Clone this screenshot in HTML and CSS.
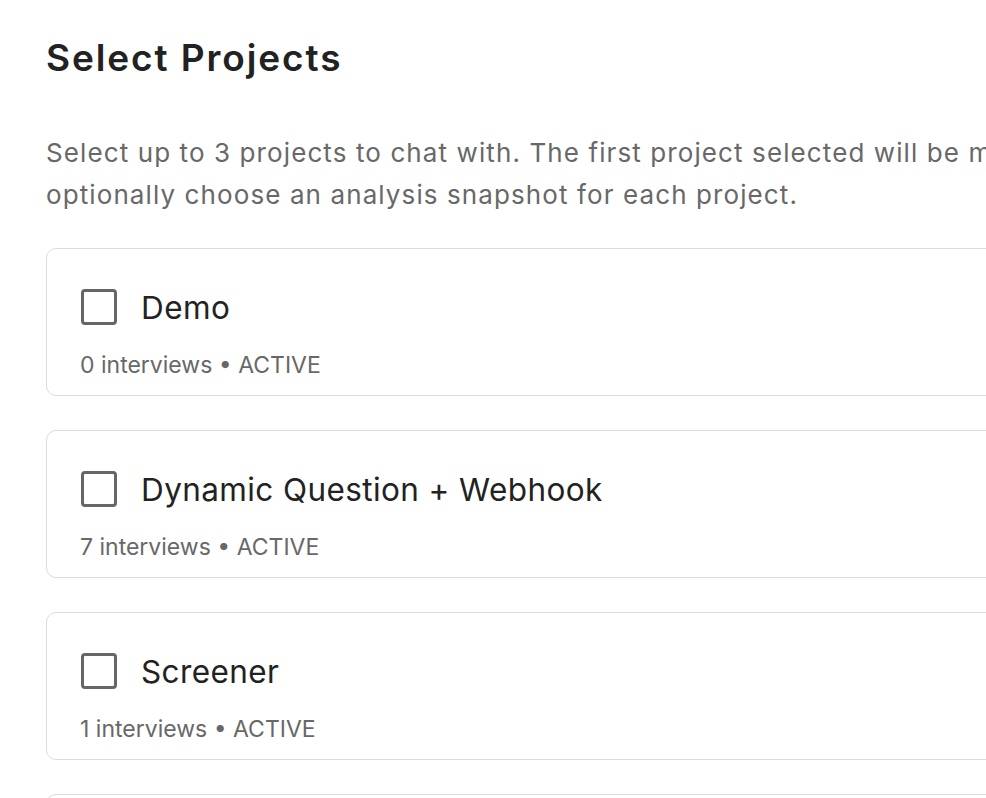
FILE: index.html
```html
<!DOCTYPE html>
<html lang="en">
<head>
    <meta charset="UTF-8">
    <meta name="viewport" content="width=device-width, initial-scale=1.0">
    <title>Select Projects</title>
    <link rel="stylesheet" href="styles.css">
</head>
<body>
    <div class="page">
        <h1 class="page-title">Select Projects</h1>
        <p class="page-desc">
            Select up to 3 projects to chat with. The first project selected will be marked as primary. You can<br>
            optionally choose an analysis snapshot for each project.
        </p>

        <div class="project-list">
            <label class="project-card">
                <div class="project-head">
                    <input type="checkbox" class="project-check">
                    <span class="project-name">Demo</span>
                </div>
                <div class="project-meta">0 interviews • ACTIVE</div>
            </label>
            <label class="project-card">
                <div class="project-head">
                    <input type="checkbox" class="project-check">
                    <span class="project-name">Dynamic Question + Webhook</span>
                </div>
                <div class="project-meta">7 interviews • ACTIVE</div>
            </label>
            <label class="project-card">
                <div class="project-head">
                    <input type="checkbox" class="project-check">
                    <span class="project-name">Screener</span>
                </div>
                <div class="project-meta">1 interviews • ACTIVE</div>
            </label>
            <label class="project-card">
                <div class="project-head">
                    <input type="checkbox" class="project-check">
                    <span class="project-name">Onboarding Research</span>
                </div>
                <div class="project-meta">3 interviews • ACTIVE</div>
            </label>
        </div>
    </div>
</body>
</html>
```

FILE: styles.css
```css
* {
    margin: 0;
    padding: 0;
    box-sizing: border-box;
    font-family: Inter, 'Noto Sans', sans-serif;
}

body {
    background: #fff;
    overflow: hidden;
}

.page {
    width: 1400px;
    padding: 32px 0 0 46px;
}

.page-title {
    font-size: 37px;
    font-weight: 600;
    color: #222;
    line-height: 52px;
    letter-spacing: 1.9px;
}

.page-desc {
    margin-top: 48px;
    font-size: 26px;
    line-height: 42px;
    color: #686868;
    letter-spacing: 1.1px;
}

.project-list {
    margin-top: 32px;
    display: flex;
    flex-direction: column;
    gap: 34px;
}

.project-card {
    display: block;
    height: 148px;
    border: 1.5px solid #dcdcdc;
    border-radius: 10px;
    padding: 33px 33px 0;
    cursor: pointer;
}

.project-head {
    display: flex;
    align-items: center;
    gap: 24px;
    height: 50px;
}

.project-check {
    appearance: none;
    width: 36px;
    height: 36px;
    margin-left: 1px;
    border: 3px solid #666;
    border-radius: 4px;
    flex-shrink: 0;
    cursor: pointer;
}

.project-name {
    font-size: 31.5px;
    color: #222;
    letter-spacing: 0.4px;
}

.project-meta {
    margin-top: 17px;
    font-size: 23px;
    line-height: 33px;
    color: #686868;
}
```
